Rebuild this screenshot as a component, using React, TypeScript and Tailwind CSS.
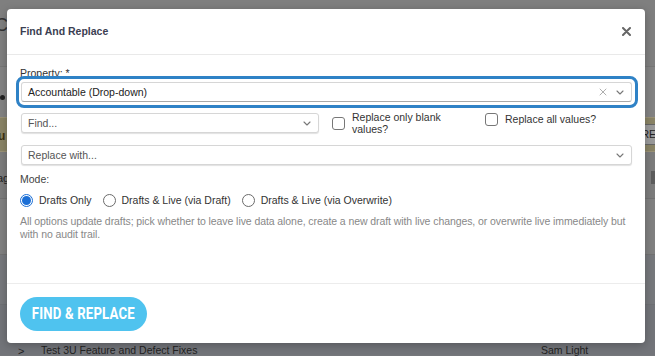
import { X } from 'lucide-react';

function Chevron() {
  return (
    <svg width="8" height="5" viewBox="0 0 8 5" className="shrink-0">
      <path d="M1 1l3 3 3-3" fill="none" stroke="#777" strokeWidth="1.1" strokeLinecap="round" strokeLinejoin="round" />
    </svg>
  );
}

function SelectBox({ text, muted, className = '' }: { text: string; muted?: boolean; className?: string }) {
  return (
    <div
      className={`h-[20px] flex items-center justify-between pl-[6px] pr-[7px] bg-white border border-[#d6d6d6] rounded-[3px] shadow-[0_1px_1px_rgba(0,0,0,0.12)] ${className}`}
    >
      <span className={`text-[10.5px] leading-none ${muted ? 'text-[#555]' : 'text-[#222]'}`}>{text}</span>
      <Chevron />
    </div>
  );
}

function Radio({ checked, label }: { checked?: boolean; label: string }) {
  return (
    <label className="flex items-center gap-[6px]">
      {checked ? (
        <span className="w-[13px] h-[13px] rounded-full border border-[#1b6fd6] flex items-center justify-center">
          <span className="w-[9px] h-[9px] rounded-full bg-[#1b6fd6]" />
        </span>
      ) : (
        <span className="w-[13px] h-[13px] rounded-full border border-[#6b6b6b] bg-white" />
      )}
      <span className="text-[10.5px] text-[#333]">{label}</span>
    </label>
  );
}

export default function App() {
  return (
    <div className="relative w-[655px] h-[356px] overflow-hidden bg-[#75777b] font-['Liberation_Sans',Arial,sans-serif]">
      {/* page behind the overlay */}
      <div className="flex flex-col">
        <div className="h-[67px] bg-[#7f7f7f] border-b border-[#767676] relative">
          <span className="absolute left-[-5px] top-[12px] text-[18px] text-[#333]">C</span>
        </div>
        <div className="h-[50px] bg-[#838383] relative">
          <span className="absolute left-0 top-[28px] w-[5px] h-[5px] rounded-full bg-[#222]" />
        </div>
        <div className="h-[35px] bg-[#8a8466] border-y border-[#9a9276] relative">
          <span className="absolute left-[-2px] top-[9px] text-[12px] font-bold text-[#3d3110]">u</span>
          <span className="absolute right-[-4px] top-[6px] h-[21px] px-[2px] bg-[#9a9a9a] border border-[#666] text-[10.5px] leading-[19px] text-[#222]">RE</span>
        </div>
        <div className="h-[47px] bg-[#7c7c7c] relative border-b border-[#727272]">
          <span className="absolute left-[-3px] top-[18px] text-[11px] text-[#222]">ag</span>
          <span className="absolute right-[-6px] top-[19px] w-[10px] h-[13px] bg-[#5d5d5d]" />
        </div>
        <div className="h-[56px] bg-[#808080] border-b border-[#727272]" />
        <div className="h-[50px] bg-[#76787c] border-b border-[#6e7074]" />
        <div className="h-[50px] bg-[#727479] relative">
          <span className="absolute left-[18px] top-[38px] text-[11px] text-[#222]">&gt;</span>
          <span className="absolute left-[41px] top-[38px] text-[10.5px] text-[#222]">Test 3U Feature and Defect Fixes</span>
          <span className="absolute left-[541px] top-[38px] text-[10.5px] text-[#222]">Sam Light</span>
        </div>
      </div>

      {/* modal */}
      <div className="absolute left-[7px] top-[9px] w-[638px] h-[334px] bg-white rounded-[4px] shadow-[0_2px_8px_rgba(0,0,0,0.25)] flex flex-col">
        <div className="h-[46px] shrink-0 flex items-center justify-between pl-[13px] pr-[14px] border-b border-[#e9e9e9]">
          <span className="text-[10.5px] font-bold text-[#3b4052]">Find And Replace</span>
          <svg width="9" height="9" viewBox="0 0 9 9">
            <path d="M1 1l7 7M8 1l-7 7" stroke="#666" strokeWidth="2" strokeLinecap="round" />
          </svg>
        </div>

        <div className="flex-1 px-[13px] pt-[12px]">
          <div className="text-[10.5px] leading-[13px] text-[#333]">Property: *</div>
          <div className="relative mt-[2px] ml-[1px]">
            <div className="absolute -left-[5px] -right-[6px] -top-[6px] -bottom-[6px] border-[3px] border-[#2f82c6] rounded-[8px]" />
            <div className="relative h-[20px] flex items-center justify-between pl-[6px] pr-[7px] bg-white border border-[#d6d6d6] border-b-[#a8a8a8] rounded-[3px]">
              <span className="text-[10.5px] leading-none text-[#222]">Accountable (Drop-down)</span>
              <div className="flex items-center gap-[7px]">
                <X size={12} strokeWidth={1.2} color="#777" />
                <Chevron />
              </div>
            </div>
          </div>

          <div className="mt-[11px] flex items-start">
            <SelectBox text="Find..." muted className="w-[298px] ml-[1px]" />
            <div className="ml-[13px] w-[153px] flex items-center gap-[7px] -mt-[1px]">
              <span className="w-[13px] h-[13px] rounded-[3px] border border-[#777] bg-white shrink-0" />
              <span className="w-[100px] text-[10.5px] leading-[11.5px] text-[#333]">Replace only blank values?</span>
            </div>
            <div className="flex items-center gap-[7px]">
              <span className="w-[13px] h-[13px] rounded-[3px] border border-[#777] bg-white shrink-0" />
              <span className="text-[10.5px] leading-[13px] text-[#333]">Replace all values?</span>
            </div>
          </div>

          <SelectBox text="Replace with..." muted className="mt-[10px] ml-[1px]" />

          <div className="mt-[8px] text-[10.5px] leading-[13px] text-[#444]">Mode:</div>
          <div className="mt-[7px] flex items-center gap-[11px]">
            <Radio checked label="Drafts Only" />
            <Radio label="Drafts & Live (via Draft)" />
            <Radio label="Drafts & Live (via Overwrite)" />
          </div>
          <p className="mt-[6px] pr-[4px] text-[10.5px] leading-[13.5px] tracking-[-0.08px] text-[#888]">
            All options update drafts; pick whether to leave live data alone, create a new draft with live changes, or overwrite live immediately but with no audit trail.
          </p>
        </div>

        <div className="shrink-0 border-t border-[#ececec] pt-[13px] pb-[12px] px-[13px]">
          <button className="w-[127px] h-[34px] rounded-full bg-[#4fc3ef] flex items-center justify-center overflow-visible">
            <span className="inline-block shrink-0 whitespace-nowrap scale-x-[0.8] font-['Roboto',sans-serif] font-bold text-[16.5px] text-white tracking-[0.2px]">
              FIND &amp; REPLACE
            </span>
          </button>
        </div>
      </div>
    </div>
  );
}
